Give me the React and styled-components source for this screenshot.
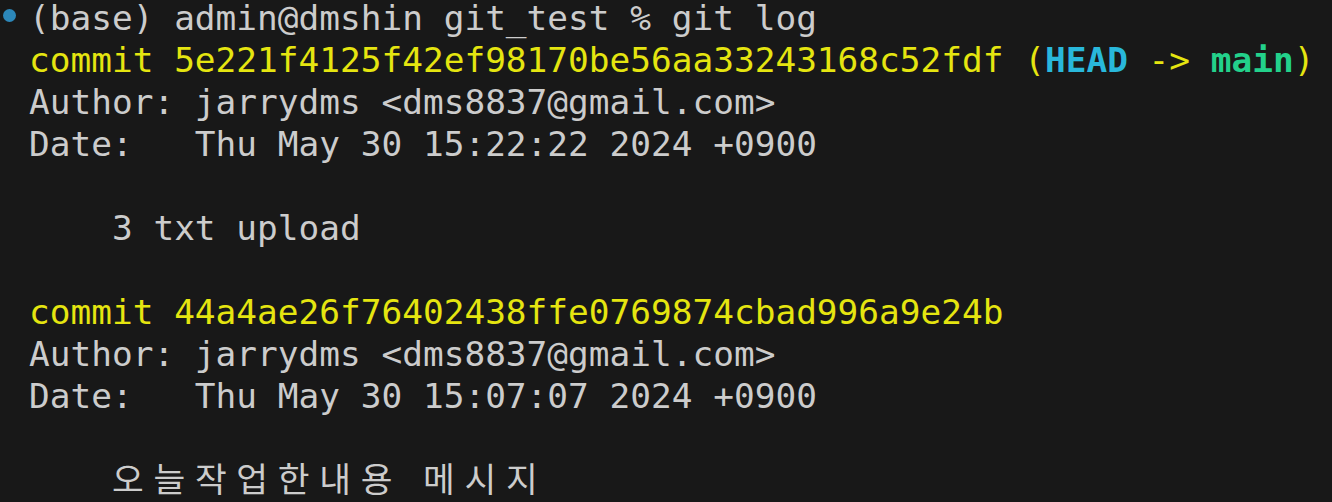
import React from 'react';
import styled, { createGlobalStyle } from 'styled-components';

const GlobalStyle = createGlobalStyle`
  html, body {
    margin: 0;
    padding: 0;
    background: #181818;
    height: 100%;
    overflow: hidden;
  }
`;

const CELL = 20.74;

const Terminal = styled('div')`
  display: flex;
  flex-direction: column;
  margin-top: -3px;
  font-family: 'DejaVu Sans Mono', 'Liberation Mono', monospace;
  font-size: 34.45px;
  color: #cccccc;
  background: #181818;
`;

const Line = styled('div')`
  display: flex;
  align-items: baseline;
  height: 42px;
  line-height: 42px;
  white-space: pre;
`;

const Gutter = styled('div')`
  position: relative;
  flex: 0 0 29px;
  align-self: stretch;
`;

const Dot = styled('span')`
  position: absolute;
  left: 3px;
  top: 12px;
  width: 13px;
  height: 13px;
  border-radius: 50%;
  background: #2c87b9;
`;

const Text = styled('span')`
  color: ${(props) => props.color || '#cccccc'};
  font-weight: ${(props) => (props.bold ? 700 : 400)};
`;

const WideCell = styled('span')`
  display: inline-block;
  width: ${CELL * 2}px;
  line-height: 1;
  font-family: 'Noto Sans CJK KR', sans-serif;
  font-size: 34.5px;
  color: #cccccc;
`;

const Wide = ({ text }) => (
  <>
    {Array.from(text).map((ch, i) => (
      <WideCell key={i}>{ch}</WideCell>
    ))}
  </>
);

const YELLOW = '#e5e510';
const CYAN = '#29b8db';
const GREEN = '#23d18b';

const Commit = ({ hash, refs }) => (
  <Line>
    <Gutter />
    <Text color={YELLOW}>commit {hash}</Text>
    {refs ? (
      <>
        <Text color={YELLOW}> (</Text>
        <Text color={CYAN} bold>HEAD</Text>
        <Text color={YELLOW}> -&gt; </Text>
        <Text color={GREEN} bold>main</Text>
        <Text color={YELLOW}>)</Text>
      </>
    ) : null}
  </Line>
);

const Plain = ({ children }) => (
  <Line>
    <Gutter />
    <Text>{children}</Text>
  </Line>
);

export default function App() {
  return (
    <>
      <GlobalStyle />
      <Terminal>
        <Line>
          <Gutter>
            <Dot />
          </Gutter>
          <Text>(base) admin@dmshin git_test % git log</Text>
        </Line>
        <Commit hash="5e221f4125f42ef98170be56aa33243168c52fdf" refs />
        <Plain>Author: jarrydms &lt;dms8837@gmail.com&gt;</Plain>
        <Plain>Date:   Thu May 30 15:22:22 2024 +0900</Plain>
        <Plain> </Plain>
        <Plain>    3 txt upload</Plain>
        <Plain> </Plain>
        <Commit hash="44a4ae26f76402438ffe0769874cbad996a9e24b" />
        <Plain>Author: jarrydms &lt;dms8837@gmail.com&gt;</Plain>
        <Plain>Date:   Thu May 30 15:07:07 2024 +0900</Plain>
        <Plain> </Plain>
        <Line>
          <Gutter />
          <Text>    </Text>
          <Wide text="오늘작업한내용" />
          <Text> </Text>
          <Wide text="메시지" />
        </Line>
      </Terminal>
    </>
  );
}
